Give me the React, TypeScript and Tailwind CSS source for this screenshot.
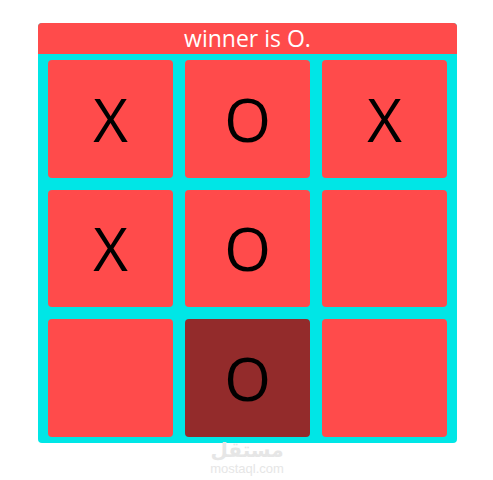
import React from "react";

const cells: { v: string; dark?: boolean }[] = [
  { v: "X" }, { v: "O" }, { v: "X" },
  { v: "X" }, { v: "O" }, { v: "" },
  { v: "" }, { v: "O", dark: true }, { v: "" },
];

export default function App() {
  return (
    <div className="relative w-[493px] h-[480px] bg-white" style={{ fontFamily: '"Open Sans", "Noto Sans", sans-serif' }}>
      <div className="pt-[23px] pl-[38px]">
        <div className="w-[419px] rounded-[4px] overflow-hidden bg-[#00e6e6]">
          <div className="h-[31px] bg-[#ff4b4b] text-center text-white text-[23px] leading-[31px]">
            winner is O.
          </div>
          <div className="grid grid-cols-3 grid-rows-3 gap-x-[12px] gap-y-[12px] px-[10px] pt-[6px] pb-[6px] h-[389px]">
            {cells.map((c, i) => (
              <div
                key={i}
                className={
                  c.dark
                    ? "rounded-[4px] bg-[#932b2b] flex items-center justify-center text-black text-[60px] leading-none"
                    : "rounded-[4px] bg-[#ff4b4b] flex items-center justify-center text-black text-[60px] leading-none"
                }
              >
                {c.v}
              </div>
            ))}
          </div>
        </div>
      </div>
      <div className="absolute left-[204px] top-[440px] w-[86px] flex flex-col items-center text-[#e6e6e6] pointer-events-none">
        <div className="text-[20px] leading-[20px] font-bold" style={{ fontFamily: '"DejaVu Sans", "Noto Sans", sans-serif' }} dir="rtl">مستقل</div>
        <div className="text-[13px] leading-[13px] mt-[2px]" style={{ fontFamily: '"Liberation Sans", sans-serif' }}>mostaql.com</div>
      </div>
    </div>
  );
}
